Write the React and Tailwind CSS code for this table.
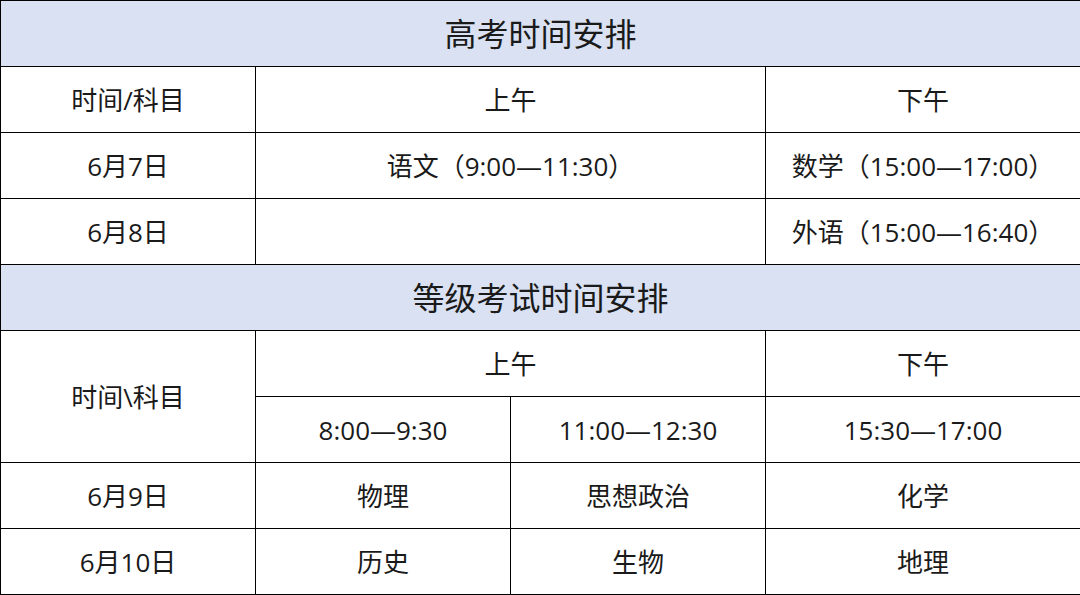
export default function App() {
  const cell = "border border-black text-center align-middle p-0 leading-none";
  const title = "border border-black bg-[#d9e1f2] text-center align-middle text-[32px] p-0 leading-none";

  return (
    <div
      className="w-[1080px] h-[595px] bg-white text-[#1a1a1a] overflow-hidden"
      style={{ fontFamily: '"Open Sans", "Noto Sans CJK SC", sans-serif' }}
    >
      <table className="w-[1080px] table-fixed border-collapse text-[26px]">
        <colgroup>
          <col className="w-[255px]" />
          <col className="w-[255px]" />
          <col className="w-[255px]" />
          <col className="w-[315px]" />
        </colgroup>
        <tbody>
          <tr className="h-[66px]">
            <td colSpan={4} className={title}>高考时间安排</td>
          </tr>
          <tr className="h-[66px]">
            <td className={cell}>时间/科目</td>
            <td colSpan={2} className={cell}>上午</td>
            <td className={cell}>下午</td>
          </tr>
          <tr className="h-[66px]">
            <td className={cell}>6月7日</td>
            <td colSpan={2} className={cell}>语文（9:00—11:30）</td>
            <td className={cell}>数学（15:00—17:00）</td>
          </tr>
          <tr className="h-[66px]">
            <td className={cell}>6月8日</td>
            <td colSpan={2} className={cell}></td>
            <td className={cell}>外语（15:00—16:40）</td>
          </tr>
          <tr className="h-[66px]">
            <td colSpan={4} className={title}>等级考试时间安排</td>
          </tr>
          <tr className="h-[66px]">
            <td rowSpan={2} className={cell}>时间\科目</td>
            <td colSpan={2} className={cell}>上午</td>
            <td className={cell}>下午</td>
          </tr>
          <tr className="h-[66px]">
            <td className={cell}>8:00—9:30</td>
            <td className={cell}>11:00—12:30</td>
            <td className={cell}>15:30—17:00</td>
          </tr>
          <tr className="h-[66px]">
            <td className={cell}>6月9日</td>
            <td className={cell}>物理</td>
            <td className={cell}>思想政治</td>
            <td className={cell}>化学</td>
          </tr>
          <tr className="h-[66px]">
            <td className={cell}>6月10日</td>
            <td className={cell}>历史</td>
            <td className={cell}>生物</td>
            <td className={cell}>地理</td>
          </tr>
        </tbody>
      </table>
    </div>
  );
}
